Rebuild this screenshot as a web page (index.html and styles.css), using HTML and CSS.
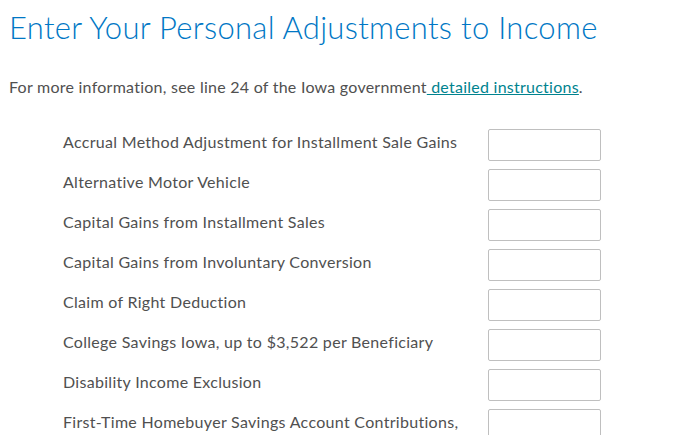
FILE: index.html
```html
<!DOCTYPE html>
<html lang="en">
<head>
<meta charset="utf-8">
<title>Enter Your Personal Adjustments to Income</title>
<link rel="stylesheet" href="styles.css">
</head>
<body>
<main class="page">
  <h1 class="title">Enter Your Personal Adjustments to Income</h1>
  <p class="intro">For more information, see line 24 of the Iowa government<a href="#" class="link"> detailed instructions</a>.</p>
  <div class="rows">
    <div class="row"><label class="label">Accrual Method Adjustment for Installment Sale Gains</label><input class="field" type="text"></div>
    <div class="row"><label class="label">Alternative Motor Vehicle</label><input class="field" type="text"></div>
    <div class="row"><label class="label">Capital Gains from Installment Sales</label><input class="field" type="text"></div>
    <div class="row"><label class="label">Capital Gains from Involuntary Conversion</label><input class="field" type="text"></div>
    <div class="row"><label class="label">Claim of Right Deduction</label><input class="field" type="text"></div>
    <div class="row"><label class="label">College Savings Iowa, up to $3,522 per Beneficiary</label><input class="field" type="text"></div>
    <div class="row"><label class="label">Disability Income Exclusion</label><input class="field" type="text"></div>
    <div class="row"><label class="label">First-Time Homebuyer Savings Account Contributions, up to $2,000 per Account Holder</label><input class="field" type="text"></div>
  </div>
</main>
</body>
</html>
```
FILE: styles.css
```css
html, body {
  margin: 0;
  padding: 0;
  background: #ffffff;
}
body {
  font-family: Lato, "Open Sans", sans-serif;
  color: #393a3d;
}
.page {
  padding: 0 0 0 9px;
}
.title {
  margin: 0;
  padding-top: 7px;
  font-size: 31px;
  line-height: 40px;
  font-weight: 300;
  letter-spacing: 0.3px;
  color: #0077c5;
}
.intro {
  margin: 30px 0 0 0;
  font-size: 16px;
  line-height: 20px;
  letter-spacing: 0.25px;
  color: #505050;
}
.link {
  color: #00838f;
  text-decoration: underline;
}
.rows {
  margin-top: 32px;
  padding-left: 54px;
  display: flex;
  flex-direction: column;
  gap: 8px;
}
.row {
  display: flex;
  align-items: flex-start;
}
.label {
  width: 410px;
  margin-right: 15px;
  padding-top: 3px;
  font-size: 16px;
  line-height: 20px;
  letter-spacing: 0.3px;
  color: #505050;
}
.field {
  flex: none;
  width: 113px;
  height: 32px;
  box-sizing: border-box;
  margin: 0;
  border: 1px solid #bfbfbf;
  border-radius: 2px;
  padding: 0 6px;
  font: inherit;
}
```
